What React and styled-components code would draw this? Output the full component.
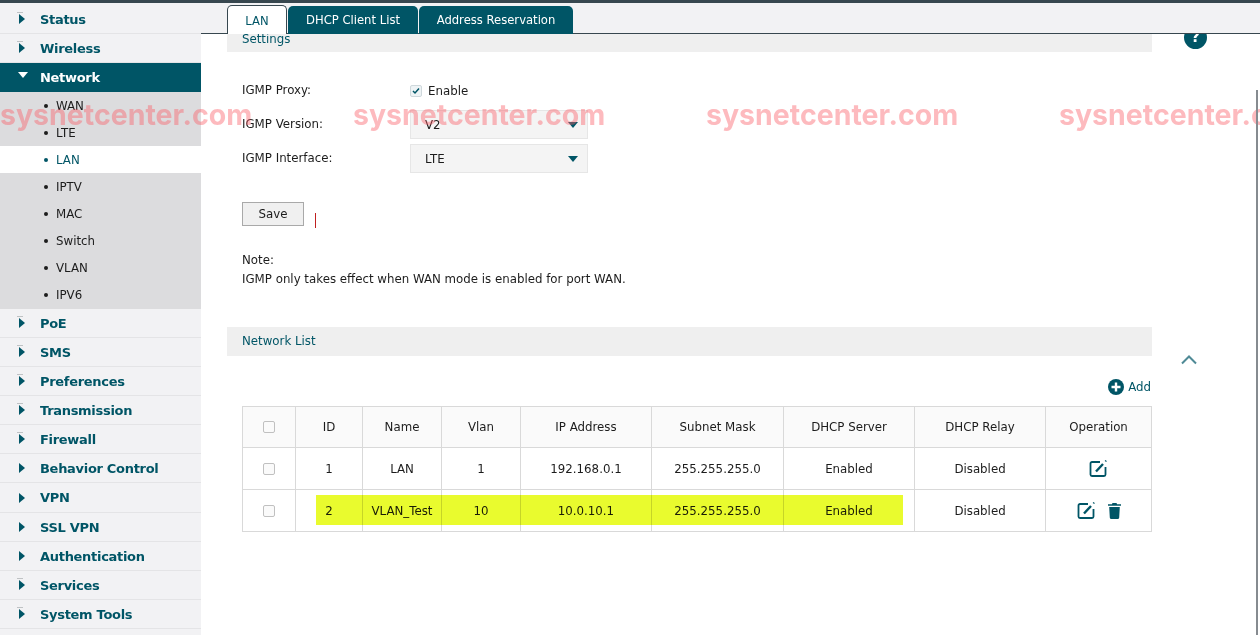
import React from 'react';
import styled, { createGlobalStyle } from 'styled-components';

const teal = '#005566';
const bodyFont = `"DejaVu Sans", Verdana, sans-serif`;

const GlobalStyle = createGlobalStyle`
  html, body {
    margin: 0;
    height: 100%;
    overflow: hidden;
    background: #fff;
  }
  body {
    font-family: ${bodyFont};
    font-size: 11.8px;
    color: #1c1c1c;
  }
  * { box-sizing: border-box; }
`;

const Page = styled.div`
  position: relative;
  width: 1260px;
  height: 635px;
  overflow: hidden;
  display: flex;
  border-top: 3px solid #37474f;
`;

const Sidebar = styled.nav`
  width: 201px;
  flex: none;
  padding-top: 2px;
  background: #f2f2f4;
`;

const MenuRow = styled.div`
  height: ${p => (p.$tall ? 30 : 29)}px;
  display: flex;
  align-items: center;
  padding-left: 19px;
  gap: 15px;
  font-size: 13px;
  font-weight: 700;
  letter-spacing: -0.3px;
  color: ${p => (p.$open ? '#fff' : teal)};
  background: ${p => (p.$open ? teal : 'transparent')};
  border-bottom: 1px solid ${p => (p.$open ? teal : '#e4e4e6')};
`;

const Arrow = styled.span`
  position: relative;
  width: 6px;
  height: 10px;
  flex: none;
  border-left: 6px solid ${teal};
  border-top: 5px solid transparent;
  border-bottom: 5px solid transparent;

  &::before {
    content: ${p => (p.$dash ? "''" : 'none')};
    position: absolute;
    left: -8px;
    top: -7px;
    width: 6px;
    height: 1px;
    background: #bfc2c4;
  }
`;

const ArrowDown = styled.span`
  width: 10px;
  height: 6px;
  flex: none;
  margin: -5px -3px 0 -1px;
  border-top: 6px solid #fff;
  border-left: 5px solid transparent;
  border-right: 5px solid transparent;
`;

const SubRow = styled.div`
  height: 27px;
  display: flex;
  align-items: center;
  padding-left: 44px;
  gap: 8px;
  font-size: 11.8px;
  color: ${p => (p.$active ? teal : '#1c1c1c')};
  background: ${p => (p.$active ? '#fff' : '#dcdcde')};

  &:last-of-type {
    height: 28px;
  }
`;

const Dot = styled.span`
  width: 4px;
  height: 4px;
  border-radius: 50%;
  background: ${p => (p.$active ? teal : '#1c1c1c')};
`;

const Main = styled.main`
  flex: 1;
  min-width: 0;
  display: flex;
  flex-direction: column;
`;

const TabStrip = styled.div`
  height: 31px;
  flex: none;
  display: flex;
  align-items: flex-end;
  gap: 1px;
  padding-left: 26px;
  background: #f2f2f4;
  border-bottom: 1px solid #37474f;
`;

const Tab = styled.div`
  height: ${p => (p.$active ? '29px' : '28px')};
  width: ${p => p.$w}px;
  margin-bottom: -1px;
  padding-top: ${p => (p.$active ? '2px' : '0')};
  padding-bottom: ${p => (p.$active ? '0' : '1px')};
  display: flex;
  align-items: center;
  justify-content: center;
  font-size: 11.6px;
  border-radius: 5px 5px 0 0;
  color: ${p => (p.$active ? teal : '#fff')};
  background: ${p => (p.$active ? '#fff' : teal)};
  border: ${p => (p.$active ? '1px solid #37474f' : 'none')};
  border-bottom: none;
  position: relative;
`;

const Content = styled.div`
  flex: 1;
  position: relative;
  padding: 0 108px 0 26px;
  overflow: hidden;
`;

const SectionHead = styled.div`
  background: #efefef;
  color: ${teal};
  padding-left: 15px;
  height: ${p => p.$h}px;
  line-height: ${p => p.$lh}px;
  margin-top: ${p => p.$mt || 0}px;
`;

const Form = styled.div`
  padding: 24px 0 0 15px;
  display: grid;
  grid-template-columns: 168px 178px;
  grid-auto-rows: 29px;
  row-gap: 5px;
  align-items: center;
`;

const Label = styled.div`
  padding-bottom: 1px;
`;

const CheckField = styled.label`
  display: flex;
  align-items: center;
  gap: 6px;
  height: 20px;
`;

const CheckBox = styled.span`
  width: 12px;
  height: 12px;
  display: flex;
  align-items: center;
  justify-content: center;
  margin: ${p => (p.$center ? '0 auto' : '0')};
  border: 1px solid ${p => (p.$checked ? '#cfd8dc' : '#c0c0c0')};
  border-radius: 2px;
  background: ${p => (p.$checked ? '#eef3f5' : '#fafafa')};
`;

const Select = styled.div`
  height: 29px;
  display: flex;
  align-items: center;
  justify-content: space-between;
  padding: 0 9px 0 14px;
  background: #f4f4f4;
  border: 1px solid #e6e6e6;

  &::after {
    content: '';
    border-top: 6px solid ${teal};
    border-left: 5px solid transparent;
    border-right: 5px solid transparent;
  }
`;

const SaveRow = styled.div`
  padding: 29px 0 0 15px;
  display: flex;
  align-items: flex-start;
  gap: 11px;
`;

const SaveButton = styled.button`
  width: 62px;
  height: 24px;
  padding: 0;
  font: inherit;
  color: #1c1c1c;
  background: #f0f0f0;
  border: 1px solid #a9a9a9;
`;

const Caret = styled.span`
  width: 1px;
  height: 15px;
  margin-top: 11px;
  background: #c02020;
`;

const Note = styled.div`
  padding: 23px 0 0 15px;
  line-height: 19px;
`;

const AddRow = styled.div`
  display: flex;
  justify-content: flex-end;
  align-items: center;
  gap: 4px;
  padding-right: 1px;
  height: 50px;
  padding-top: 12px;
  color: ${teal};
  margin-left: 15px;
`;

const TableWrap = styled.div`
  position: relative;
  margin-left: 15px;
`;

const Table = styled.table`
  width: 909px;
  table-layout: fixed;
  border-collapse: collapse;
  text-align: center;

  th, td {
    border: 1px solid #d9d9d9;
    padding: 0;
    font-weight: 400;
    height: 42px;
  }

  th {
    height: 41px;
    background: #fafafa;
  }
`;

const Highlight = styled.div`
  position: absolute;
  left: 74px;
  top: 89px;
  width: 587px;
  height: 30px;
  background: #e9fb2e;
  mix-blend-mode: multiply;
  pointer-events: none;
`;

const OpIcons = styled.div`
  display: flex;
  justify-content: center;
  align-items: center;
  gap: 12px;
`;

const HelpIcon = styled.div`
  position: absolute;
  left: 983px;
  top: -8px;
  width: 23px;
  height: 23px;
  border-radius: 50%;
  background: ${teal};
  color: #fff;
  font-size: 15px;
  font-weight: 700;
  text-align: center;
  line-height: 23px;
`;

const CollapseIcon = styled.svg`
  position: absolute;
  left: 979px;
  top: 320px;
`;

const Watermark = styled.div`
  position: absolute;
  top: 96px;
  left: ${p => p.$x}px;
  font-family: Inter, sans-serif;
  font-size: 28.5px;
  font-weight: 700;
  line-height: 32px;
  white-space: nowrap;
  color: rgba(250, 90, 100, 0.42);
  pointer-events: none;
`;

const EdgeLine = styled.div`
  position: absolute;
  top: 87px;
  bottom: 0;
  right: 2px;
  width: 2px;
  background: #868b90;
`;

const EditIcon = () => (
  <svg width="19" height="19" viewBox="0 0 19 19" fill="none">
    <path d="M11 3H3a1.5 1.5 0 0 0-1.5 1.5v11A1.5 1.5 0 0 0 3 17h12a1.5 1.5 0 0 0 1.5-1.5V8" stroke={teal} strokeWidth="1.8" />
    <path d="M7 12.5l7-7.5" stroke={teal} strokeWidth="2.4" />
    <path d="M16 1.5l1.5 1" stroke={teal} strokeWidth="1.2" />
  </svg>
);

const TrashIcon = () => (
  <svg width="13" height="16" viewBox="0 0 13 16" fill={teal}>
    <path d="M4.5 0h4l.6 1.2H13v1.6H0V1.2h3.9z" />
    <path d="M1.2 4h10.6l-.6 10.5c0 .9-.7 1.5-1.5 1.5H3.3c-.8 0-1.5-.6-1.5-1.5z" />
  </svg>
);

const CheckMark = () => (
  <svg width="8" height="8" viewBox="0 0 8 8" fill="none">
    <path d="M1 4l2 2 4-4.5" stroke={teal} strokeWidth="1.5" />
  </svg>
);

const AddIcon = () => (
  <svg width="16" height="16" viewBox="0 0 16 16">
    <circle cx="8" cy="8" r="8" fill={teal} />
    <path d="M8 3.5v9M3.5 8h9" stroke="#fff" strokeWidth="2.4" />
  </svg>
);

const topMenu = ['Status', 'Wireless'];
const subMenu = ['WAN', 'LTE', 'LAN', 'IPTV', 'MAC', 'Switch', 'VLAN', 'IPV6'];
const bottomMenu = ['PoE', 'SMS', 'Preferences', 'Transmission', 'Firewall', 'Behavior Control', 'VPN', 'SSL VPN', 'Authentication', 'Services', 'System Tools'];
const noDash = ['Behavior Control', 'VPN', 'SSL VPN', 'Authentication'];
const colWidths = [53, 67, 79, 79, 131, 132, 131, 131, 106];
const columns = ['ID', 'Name', 'Vlan', 'IP Address', 'Subnet Mask', 'DHCP Server', 'DHCP Relay', 'Operation'];
const rows = [
  ['1', 'LAN', '1', '192.168.0.1', '255.255.255.0', 'Enabled', 'Disabled'],
  ['2', 'VLAN_Test', '10', '10.0.10.1', '255.255.255.0', 'Enabled', 'Disabled'],
];

export default function App() {
  return (
    <>
      <GlobalStyle />
      <Page>
        <Sidebar>
          {topMenu.map(m => (
            <MenuRow key={m}><Arrow $dash />{m}</MenuRow>
          ))}
          <MenuRow $open><ArrowDown />Network</MenuRow>
          <div>
            {subMenu.map(s => (
              <SubRow key={s} $active={s === 'LAN'}><Dot $active={s === 'LAN'} />{s}</SubRow>
            ))}
          </div>
          {bottomMenu.map(m => (
            <MenuRow key={m} $tall={m === 'VPN'}><Arrow $dash={!noDash.includes(m)} />{m}</MenuRow>
          ))}
        </Sidebar>
        <Main>
          <TabStrip>
            <Tab $active $w={60}>LAN</Tab>
            <Tab $w={130}>DHCP Client List</Tab>
            <Tab $w={154}>Address Reservation</Tab>
          </TabStrip>
          <Content>
            <SectionHead $h={18} $lh={10}>Settings</SectionHead>
            <HelpIcon>?</HelpIcon>
            <Form>
              <Label>IGMP Proxy:</Label>
              <CheckField><CheckBox $checked><CheckMark /></CheckBox>Enable</CheckField>
              <Label>IGMP Version:</Label>
              <Select>V2</Select>
              <Label>IGMP Interface:</Label>
              <Select>LTE</Select>
            </Form>
            <SaveRow>
              <SaveButton>Save</SaveButton>
              <Caret />
            </SaveRow>
            <Note>
              Note:
              <br />
              IGMP only takes effect when WAN mode is enabled for port WAN.
            </Note>
            <SectionHead $h={29} $lh={29} $mt={38}>Network List</SectionHead>
            <AddRow><AddIcon />Add</AddRow>
            <TableWrap>
              <Table>
                <colgroup>
                  {colWidths.map((w, i) => <col key={i} style={{ width: w }} />)}
                </colgroup>
                <thead>
                  <tr>
                    <th><CheckBox $center /></th>
                    {columns.map(c => <th key={c}>{c}</th>)}
                  </tr>
                </thead>
                <tbody>
                  {rows.map((r, i) => (
                    <tr key={r[0]}>
                      <td><CheckBox $center /></td>
                      {r.map((v, j) => <td key={j}>{v}</td>)}
                      <td>
                        <OpIcons>
                          <EditIcon />
                          {i === 1 && <TrashIcon />}
                        </OpIcons>
                      </td>
                    </tr>
                  ))}
                </tbody>
              </Table>
              <Highlight />
            </TableWrap>
            <CollapseIcon width="18" height="11" viewBox="0 0 18 11" fill="none">
              <path d="M2 9.5l7-7 7 7" stroke="#4f8a96" strokeWidth="2" />
            </CollapseIcon>
          </Content>
        </Main>
        {[0, 353, 706, 1059].map(x => (
          <Watermark key={x} $x={x}>sysnetcenter.com</Watermark>
        ))}
        <EdgeLine />
      </Page>
    </>
  );
}
